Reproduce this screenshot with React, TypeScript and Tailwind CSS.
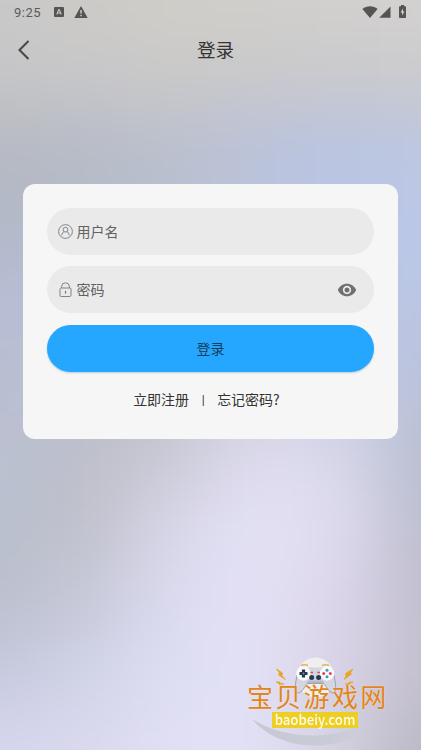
import React from "react"

type FieldProps = {
    icon: React.ReactNode
    label: string
    action?: React.ReactNode
}

// Colour patches of the wallpaper, blurred into each other
const patches = [
    ["#cac9c8", "#cccac7", "#d1cec8", "#d1cfcb", "#d3d1ce", "#d4d2d1"],
    ["#c6c6c8", "#c8c8c9", "#cac9c9", "#cac9ca", "#cac9cc", "#cbcacd"],
    ["#b5b9c1", "#b5bac6", "#b9bfcd", "#bac2da", "#b8c4e3", "#bbc6e2"],
    ["#b3b8c8", "#b5bccb", "#b9bfce", "#bac4de", "#b9c6e7", "#bcc8e7"],
    ["#b7bdd6", "#b7bdd2", "#bbc0d0", "#c0c6da", "#bbc6e2", "#bac6e5"],
    ["#b9bed2", "#bcbfcd", "#c0c2ce", "#d0d0e2", "#c7cbe1", "#bac2dc"],
    ["#bac1d2", "#bdbec9", "#c8c8d4", "#dcdaeb", "#dad8eb", "#b7bed1"],
    ["#b9c0ce", "#bfc0ca", "#d8d6e8", "#e4e2f6", "#e1ddf0", "#bcbece"],
    ["#bbbfcc", "#c6c8d8", "#dbdaef", "#e4e1f6", "#ddd6ea", "#c0bdce"],
    ["#c7c9df", "#d1d4e8", "#dddff3", "#e3e1f6", "#d9d3e7", "#c4c0cf"],
    ["#d6d8ef", "#dad9ee", "#e1dff4", "#e3e1f6", "#d4d1e0", "#b9b7c4"],
]

const Wallpaper = () => (
    <svg className="absolute inset-0 h-full w-full" viewBox="0 0 421 750">
        <filter
            id="soften"
            filterUnits="userSpaceOnUse"
            x="-200"
            y="-200"
            width="821"
            height="1150"
            colorInterpolationFilters="sRGB"
        >
            <feGaussianBlur stdDeviation="36" />
        </filter>
        <g filter="url(#soften)">
            {patches.map((row, r) =>
                row.map((fill, c) => (
                    <rect
                        key={`${r}-${c}`}
                        x={c === 0 ? -160 : c * 84 - 42}
                        y={r === 0 ? -160 : r * 75 - 37.5}
                        width={c === 0 ? 203 : c === 5 ? 200 : 85}
                        height={r === 0 ? 198.5 : r === 10 ? 200 : 76}
                        fill={fill}
                    />
                ))
            )}
        </g>
    </svg>
)

const StatusBar = () => (
    <div className="flex h-6 items-center justify-between px-[14px] text-[#545454]">
        <div className="flex items-center">
            <span className="w-[40px] pt-px font-['Roboto'] text-[13px] leading-6 tracking-[0.5px] text-[#5b5b5b]">
                9:25
            </span>
            <svg className="h-[10px] w-[10px]" viewBox="0 0 10 10">
                <rect width="10" height="10" rx="1" fill="currentColor" />
                <path d="M2.8 7.5 4.6 2.8h.8l1.8 4.7M3.6 6h2.8" fill="none" stroke="#cbcac8" strokeWidth="1.1" />
            </svg>
            <svg className="ml-[10px] h-3 w-[14px]" viewBox="0 0 14 12">
                <path d="M7 0 13.7 12H.3Z" fill="currentColor" />
                <path d="M7 4v3.5M7 8.800v1.500" stroke="#cbcac8" strokeWidth="1.5" />
            </svg>
        </div>
        <div className="-mt-px flex items-center">
            <svg className="h-3 w-4" viewBox="0 0 16 12">
                <path d="M.4 3C4.700-.8 11.300-.8 15.600 3L8 12Z" fill="currentColor" />
            </svg>
            <svg className="ml-px h-3 w-3" viewBox="0 0 12 12">
                <path d="M11.500.4v11.400H.2Z" fill="currentColor" />
            </svg>
            <svg className="mr-px ml-2 h-[13px] w-[7px]" viewBox="0 0 7 13">
                <path d="M2 0h3v1.300h1.200q.8 0 .8.8v10.100q0 .8-.8.8H.8q-.8 0-.8-.8V2.100q0-.8.8-.8H2Z" fill="currentColor" />
                <path d="M4 3.500 1.500 7.500h1.600v3l2.500-4H4Z" fill="#d1d0ce" />
            </svg>
        </div>
    </div>
)

const UserIcon = () => (
    <svg className="h-[15px] w-[15px]" viewBox="0 0 15 15" fill="none" stroke="#7b7b7b" strokeWidth="0.9">
        <circle cx="7.5" cy="7.5" r="6.9" />
        <circle cx="7.5" cy="5.7" r="2.4" />
        <path d="M3.800 11.400c.1-2 1.200-3.400 2.600-3.800M11.200 11.400c-.1-2-1.200-3.400-2.600-3.800" />
    </svg>
)

const LockIcon = () => (
    <svg className="h-[15px] w-[15px]" viewBox="0 0 15 15" fill="none" stroke="#777" strokeWidth="0.9">
        <rect x="2" y="6" width="11" height="8.5" rx="1.2" />
        <path d="M3.600 6V4.700a3.900 3.900 0 0 1 7.800 0V6" />
        <path d="M7.500 8.800v2.900" strokeWidth="1.2" />
    </svg>
)

const EyeIcon = () => (
    <svg className="h-5 w-5" viewBox="0 0 24 24" fill="#707070">
        <path d="M12 4.500C7 4.500 2.730 7.610 1 12c1.730 4.390 6 7.500 11 7.500s9.270-3.110 11-7.500c-1.730-4.390-6-7.500-11-7.500zM12 17c-2.760 0-5-2.240-5-5s2.240-5 5-5 5 2.240 5 5-2.240 5-5 5zm0-8c-1.660 0-3 1.340-3 3s1.340 3 3 3 3-1.340 3-3-1.340-3-3-3z" />
    </svg>
)

const Field = ({ icon, label, action }: FieldProps) => (
    <div className="flex h-[46.7px] items-center rounded-full bg-[#eaeaea] pr-[17px] pl-[11px]">
        {icon}
        <span className="ml-[3.5px] flex-1 pt-px text-[14px] leading-5 text-[#626262]">{label}</span>
        {action}
    </div>
)

const Watermark = () => (
    <div className="absolute top-[656px] left-[246px] h-[94px] w-[142px]">
        <svg className="absolute inset-0 h-full w-full" viewBox="0 0 142 94">
            <defs>
                <linearGradient id="swoosh">
                    <stop offset="0" stopColor="#c6c8d3" />
                    <stop offset=".65" stopColor="#c9cbd6" />
                    <stop offset="1" stopColor="#cfccd9" stopOpacity=".2" />
                </linearGradient>
            </defs>
            <path d="M6 63c34 21 80 22 124 2-29 32-94 34-124-2Z" fill="url(#swoosh)" />
            <ellipse cx="69.500" cy="21.500" rx="19" ry="20" fill="#f0eff0" />
            <path
                d="M51 19c-1.500 8-2.500 14-.5 17.500 3 1.500 6-1.500 8.500-6 1-2 2-3 4-3h13c2 0 3 1 4 3 2.500 4.500 5.500 7.500 8.500 6 2-3.500 1-9.500-.5-17.500Z"
                fill="#d5d7e0"
                stroke="#9c9eb0"
                strokeWidth="1"
            />
            <path d="M56 11.500h27v14H56Z" fill="#d3d5df" />
            <path d="M63 24.500h13l3 2.500H60Z" fill="#b5b7c5" />
            <ellipse cx="57.500" cy="17.500" rx="7.2" ry="7.2" fill="#fafafd" />
            <ellipse cx="81" cy="17.500" rx="7.2" ry="7.2" fill="#fafafd" />
            <path d="M55 9.500q4-1.500 7 0M76 9.500q4-1.500 7 0" fill="none" stroke="#e7b354" strokeWidth="1.5" />
            <path d="M57.500 13.500v8M53.500 17.500h8" stroke="#23384d" strokeWidth="3.2" />
            <circle cx="57.500" cy="17.500" r=".9" fill="#8795a3" />
            <circle cx="65.700" cy="21.500" r="2.5" fill="#263c50" />
            <circle cx="72.600" cy="21.500" r="2.5" fill="#263c50" />
            <path d="M64.500 16.500h2.500M71.400 16.500h2.500" stroke="#d74757" strokeWidth="1.5" />
            <circle cx="81" cy="14.200" r="1.5" fill="#3a9bba" />
            <circle cx="77.700" cy="17.500" r="1.5" fill="#df4559" />
            <circle cx="84.300" cy="17.500" r="1.5" fill="#df4559" />
            <circle cx="81" cy="20.800" r="1.5" fill="#3a9bba" />
            <path
                d="m30.500 13 6 4-.5 2.500 3.500 4-7-4.500.8-2.200ZM107 13l-7.500 4.500.5 2.500-2 3.500 7.500-5.500-1-1.500ZM30 26l4 0v1.500l4 .5-5 .5-.5-1.200ZM107 26l-4 0v1.500l-4 .5 4.500.5.5-1.200Z"
                fill="#eba329"
                stroke="#eba329"
                strokeWidth=".8"
            />
        </svg>
        <div className="relative flex flex-col items-start pt-[29px]">
            <div className="h-[27px] pl-[1px] text-[26px] leading-[27px] tracking-[2.3px] whitespace-nowrap text-[#e08420] [text-shadow:0_0_1px_#fff2da]">
                宝贝游戏网
            </div>
            <div className="ml-[26px] flex h-[16px] w-[86px] items-center justify-center bg-[#edce22] font-['Noto_Sans_CJK_SC',sans-serif] text-[13.2px] leading-4 font-medium text-[#fffbe7]">
                <span className="-mt-[2px] scale-y-110">baobeiy.com</span>
            </div>
        </div>
    </div>
)

const App = () => {
    return (
        <div className="relative h-[750px] w-[421px] overflow-hidden bg-[#c8c9d4] font-['Roboto','Noto_Sans_CJK_SC',sans-serif]">
            <Wallpaper />
            <div className="relative">
                <StatusBar />
                <header className="grid h-[52px] grid-cols-[48px_1fr_38px] items-center">
                    <button aria-label="返回" className="pl-[17px]">
                        <svg className="h-5 w-[14px]" viewBox="0 0 14 20" fill="none" stroke="#484848" strokeWidth="2.1">
                            <path d="m11.500 1-9 9 9 9" />
                        </svg>
                    </button>
                    <h1 className="pt-[2px] text-center text-[18.6px] leading-7 text-[#343434]">登录</h1>
                </header>

                <main className="mr-[23.5px] ml-[23.4px] mt-[108px] flex h-[255px] flex-col gap-[11.8px] rounded-xl bg-[#f6f6f6] px-[23.5px] pt-6">
                    <Field icon={<UserIcon />} label="用户名" />
                    <Field icon={<LockIcon />} label="密码" action={<EyeIcon />} />
                    <button className="h-[46.7px] rounded-full bg-[#26a7ff] pt-px text-[14px] leading-5 text-[#173d59] shadow-[0_1px_2px_#b5cbdc]">
                        登录
                    </button>
                    <div className="mt-[7px] flex justify-center pr-[8px] text-[14px] leading-5 text-[#333]">
                        <span>立即注册</span>
                        <span className="w-[28px] text-center text-[12px]">|</span>
                        <span className="-mt-px font-['Noto_Sans_CJK_SC',sans-serif]">忘记密码?</span>
                    </div>
                </main>
            </div>
            <Watermark />
        </div>
    )
}

export default App
